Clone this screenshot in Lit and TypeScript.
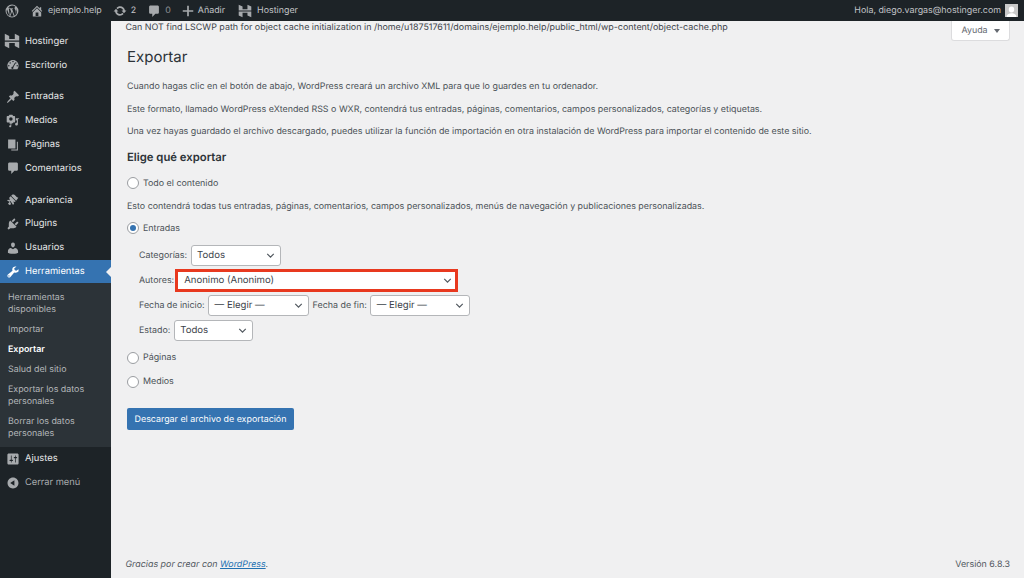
import { LitElement, html, css } from "lit";
import { customElement } from "lit/decorators.js";

const hostinger = html`<svg viewBox="0 0 20 20" width="100%" height="100%"><path fill="currentColor" d="M1 1l5.500 2.700V7.500h7V1l5.500 2.700V9.300H1zM1 10.800h18V19l-5.500-2.700v-3.800h-7V19L1 16.300z"/></svg>`;
const icon = (d: unknown) => html`<svg viewBox="0 0 20 20" width="100%" height="100%"><path fill="currentColor" d="${d}"/></svg>`;
const I = {
  wp: "M10 .8a9.200 9.200 0 1 0 0 18.400A9.200 9.200 0 0 0 10 .8zm0 1.400a7.800 7.800 0 0 1 5.300 2.100c-1-.1-1.700.7-1.700 1.600 0 .8.500 1.400 1 2.200.300.600.700 1.400.700 2.600 0 .8-.3 1.800-.7 3.100l-1 3-3.300-9.800c.500 0 1-.1 1-.1.500 0 .4-.8-.1-.7 0 0-1.500.1-2.400.1-.9 0-2.300-.1-2.300-.1-.5 0-.6.700-.1.700 0 0 .4.100.9.100l1.400 3.800-2 5.900L5.500 6.300c.5 0 1-.1 1-.1.5 0 .4-.8-.1-.7 0 0-1.400.1-2.300.1A7.800 7.800 0 0 1 10 2.200zM2.900 7.500l3.700 10a7.800 7.800 0 0 1-3.700-10zm7.200 3.300l2.500 6.700a7.800 7.800 0 0 1-5 .1zm7-.8a7.800 7.800 0 0 1-3.400 7.200l2.400-7c.5-1.100.6-2 .6-2.800 0-.3 0-.6-.1-.8.300.5.500 1.400.500 3.400z",
  home: "M16 8.500l1.530 1.530-1.060 1.060L10 4.620l-6.470 6.470-1.060-1.060L10 2.500l4 4v-2h2v4zm-6-2.460l6 5.990V18H4v-5.970zM12 17v-5H8v5h4z",
  refresh: "M10.200 3.280c3.530 0 6.430 2.610 6.920 6h2.080l-3.500 4-3.500-4h2.320c-.450-1.970-2.210-3.440-4.320-3.440-1.450 0-2.730.71-3.540 1.780L4.950 5.660C6.230 4.200 8.110 3.280 10.200 3.280zm-.4 13.440c-3.520 0-6.430-2.610-6.920-6H.8l3.500-4c1.170 1.330 2.330 2.670 3.500 4H5.480c.450 1.970 2.210 3.440 4.320 3.440 1.450 0 2.730-.71 3.540-1.780l1.710 1.950c-1.280 1.460-3.150 2.390-5.250 2.390z",
  comment: "M5 2h10c1.100 0 2 .9 2 2v8c0 1.100-.9 2-2 2h-3l-4.500 4.500V14H5c-1.100 0-2-.9-2-2V4c0-1.100.9-2 2-2z",
  plus: "M17.500 8.800v2.400h-6.300v6.300H8.800v-6.300H2.500V8.800h6.300V2.500h2.400v6.300h6.300z",
  dash: "M3.760 16h12.480A7.970 7.970 0 0 0 18 11c0-4.420-3.580-8-8-8s-8 3.580-8 8a7.970 7.970 0 0 0 1.760 5zM10 4a1 1 0 1 1 0 2 1 1 0 0 1 0-2zM6 6a1 1 0 1 1 0 2 1 1 0 0 1 0-2zm8 0a1 1 0 1 1 0 2 1 1 0 0 1 0-2zm-1.500 1.300l1 .7-3 5.300a1.500 1.500 0 1 1-1-.7zM4 10a1 1 0 1 1 0 2 1 1 0 0 1 0-2zm12 0a1 1 0 1 1 0 2 1 1 0 0 1 0-2z",
  pin: "M10.440 3.020l1.820-1.820 6.360 6.350-1.830 1.820c-1.050-.68-2.480-.57-3.410.36l-.75.750c-.92.930-1.040 2.350-.35 3.410l-1.830 1.820-2.410-2.410-2.800 2.790c-.42.420-3.380 2.710-3.800 2.290s1.860-3.390 2.280-3.810l2.790-2.790L4.100 9.360l1.830-1.820c1.050.69 2.480.57 3.400-.36l.75-.75c.93-.92 1.050-2.350.36-3.410z",
  media: "M13 11V4c0-.55-.45-1-1-1h-1.670L9 1H5L3.670 3H2c-.55 0-1 .45-1 1v7c0 .55.45 1 1 1h10c.55 0 1-.45 1-1zM7 4.500a2.500 2.500 0 0 1 0 5 2.500 2.500 0 0 1 0-5zM14 6h5v.07L17 8v6.500c0 1.100-.9 2-2 2s-2-.9-2-2 .9-2 2-2c.17 0 .34.020.5.070V8.500L14 10V6zM5.150 14.200l1.360-.6v2.400c-.14-.04-.3-.06-.45-.06-.86 0-1.560.7-1.560 1.560s.7 1.500 1.560 1.500 1.500-.64 1.500-1.500v-3.700L10 13v-1.500H5.150z",
  pages: "M17 5.500V18H7.500v-1.500H15.500V5.500zM13.500 2v13H3V2z",
  brush: "M14.480 11.060L7.410 3.990l1.500-1.500c.5-.56 2.300-.47 3.510.32 1.210.8 1.430 1.280 2.060 2.140.640.850 1.420 1.060 1.420 1.060l1.700.71-3.120 4.340zM6.700 4.700l7.070 7.070-1.060 1.060-2.120-.7 1.060 3.530-1.770 1.060-3.530-5.300-.71.710 1.760 3.890-2.470 1.060-2.120-1.760 2.470-2.830L1.660 11l1.060-1.420 2.830.71-1.060-3.530z",
  plugin: "M13.110 4.360L9.870 7.600 8 5.730l3.240-3.240c.350-.340 1.050-.2 1.560.32.520.510.660 1.210.31 1.550zm-8 1.770l.91-1.120 9.010 9.010-1.190.84c-.710.710-2.630 1.160-3.820 1.160H6.140L4.900 17.260c-.59.590-1.540.59-2.120 0a1.500 1.500 0 0 1 0-2.120l1.240-1.240v-3.880c0-1.130.4-3.180 1.090-3.890zm7.260 3.970l3.240-3.240c.340-.350 1.040-.210 1.550.31.520.510.660 1.210.31 1.550l-3.240 3.250z",
  users: "M10 9.250c-2.270 0-2.730-3.440-2.730-3.440C7 4.020 7.820 2 9.970 2c2.160 0 2.980 2.020 2.710 3.810 0 0-.41 3.440-2.680 3.440zm0 2.570L12.720 10c2.390 0 4.520 2.330 4.520 4.530v2.490s-3.650 1.130-7.240 1.130c-3.650 0-7.240-1.130-7.240-1.130v-2.490c0-2.250 1.940-4.480 4.150-4.480z",
  tools: "M16.680 9.770c-1.340 1.340-3.300 1.670-4.950.99l-5.410 6.520c-.99.990-2.590.99-3.570 0-.99-.98-.99-2.580 0-3.570l6.520-5.420c-.68-1.650-.35-3.610.99-4.950 1.280-1.280 3.120-1.640 4.730-1.080L11.620 5.150l.99 2.250 2.240.99 2.920-2.380c.56 1.610.2 3.450-1.090 4.760zM4.180 16.500a.9.9 0 1 0 0-1.800.9.9 0 0 0 0 1.800z",
  settings: "M18 16V4c0-1.100-.9-2-2-2H4c-1.100 0-2 .9-2 2v12c0 1.100.9 2 2 2h12c1.100 0 2-.9 2-2zM8 11h1c.55 0 1 .45 1 1s-.45 1-1 1H8v1.500c0 .28-.22.500-.5.500s-.5-.22-.5-.5V13H6c-.55 0-1-.45-1-1s.45-1 1-1h1V5.500c0-.28.22-.5.500-.5s.5.220.5.500V11zm5-2h-1c-.55 0-1-.45-1-1s.45-1 1-1h1V5.500c0-.28.22-.5.500-.5s.5.220.5.500V7h1c.55 0 1 .45 1 1s-.45 1-1 1h-1v5.500c0 .28-.22.500-.5.500s-.5-.22-.5-.5V9z",
  collapse: "M10 2.160c4.330 0 7.840 3.510 7.840 7.840s-3.510 7.840-7.840 7.840S2.160 14.330 2.160 10 5.670 2.160 10 2.160zM12 14V6l-6 4z",
};

@customElement("app-root")
export class AppRoot extends LitElement {
  static styles = css`
    :host { display: flex; flex-direction: column; width: 1024px; height: 578px; overflow: hidden; background: #f0f0f1; color: #4a5056; font-family: Inter, "Liberation Sans", sans-serif; font-size: 8.900px; position: relative; text-rendering: geometricPrecision; }
    .bar { height: 21px; background: #1d2327; color: #c3c4c7; display: flex; align-items: center; flex: none; font-size: 8.900px; }
    .bar .i { width: 14px; height: 14px; display: block; color: #a7aaad; flex: none; }
    .bi { display: flex; align-items: center; gap: 4px; }
    .bi.a { margin-left: 11px; }
    .bi.p { margin-left: 10px; gap: 3px; }
    .bi.w { margin-left: 13px; gap: 5px; }
    .zero { color: #8c8f94; }
    .barLeft { display: flex; align-items: center; flex: 1; padding-left: 5px; }
    .barRight { display: flex; align-items: center; gap: 4px; padding-right: 6px; }
    .avatar { width: 13px; height: 13px; background: #c9c9c9; display: flex; align-items: flex-end; justify-content: center; overflow: hidden; }
    .avatar svg { width: 11px; height: 11px; display: block; }
    .body { display: flex; flex: 1; min-height: 0; }
    .side { width: 111px; flex: none; background: #1d2327; color: #e6e7e8; font-size: 9.400px; padding-top: 8.500px; box-sizing: border-box; }
    .m { height: 23.800px; display: flex; align-items: center; position: relative; }
    .m .ic { width: 14px; height: 14px; margin-left: 6px; margin-right: 5px; color: #a7aaad; flex: none; }
    .m.host .ic { width: 16px; height: 16px; margin-left: 4px; margin-right: 5px; }
    .gap { height: 8px; }
    .m.cur { background: #3573b1; color: #fff; }
    .m.cur .ic { color: #fff; }
    .m.cur::after { content: ""; position: absolute; right: 0; top: 7px; border: 5px solid transparent; border-right-color: #f0f0f1; border-left: 0; }
    .sub { background: #2c3338; color: #b4b7ba; font-size: 8.900px; line-height: 12px; padding: 8.200px 8px 0; display: flex; flex-direction: column; gap: 8px; height: 163.500px; box-sizing: border-box; }
    .sub b { color: #fff; font-weight: 600; }
    .dim { color: #a7aaad; font-size: 9.300px; }
    .main { flex: 1; min-width: 0; padding: 0 14px 0 16px; display: flex; flex-direction: column; position: relative; }
    .notice { height: 13px; line-height: 13px; margin-left: -1.500px; color: #3c434a; font-size: 8.930px; }
    .help { position: absolute; top: 0; right: 14px; width: 59px; height: 20px; background: #fff; border: 1px solid #dcdcde; border-top: 0; border-radius: 0 0 3px 3px; box-sizing: border-box; display: flex; align-items: center; justify-content: center; gap: 6px; color: #646970; }
    .help::after { content: ""; border: 3px solid transparent; border-top: 4px solid #646970; border-bottom: 0; }
    h1 { font-size: 15px; line-height: 22px; font-weight: 400; color: #2c3338; margin: 12px 0 0; }
    p { margin: 0; line-height: 13px; }
    .intro { display: flex; flex-direction: column; gap: 9.500px; margin-top: 12px; }
    h2 { font-size: 11.300px; line-height: 16px; font-weight: 600; color: #2c3338; margin: 11px 0 0; }
    .r { display: flex; align-items: center; gap: 4px; height: 14px; }
    .r.t { margin-top: 11px; }
    .r.e { margin-top: 8px; }
    .r.pa { margin-top: 8px; }
    .r.me { margin-top: 10px; }
    .radio { width: 10px; height: 10px; border-radius: 50%; background: #fff; border: 1px solid #9a9da1; flex: none; display: flex; align-items: center; justify-content: center; }
    .radio.on::after { content: ""; width: 6px; height: 6px; border-radius: 50%; background: #3573b1; }
    .desc { margin-top: 10px; }
    .f { display: flex; flex-direction: column; margin-top: 7.500px; }
    .row { display: flex; align-items: center; padding-left: 12px; gap: 3.500px; height: 25px; }
    .row.tight { gap: 1px; }
    .sel { height: 21px; background: #fff; border: 1px solid #b4b6b9; border-radius: 3px; box-sizing: border-box; display: flex; align-items: center; justify-content: space-between; padding: 0 3px 0 5.500px; font-size: 9.600px; color: #3c434a; flex: none; }
    .sel svg { width: 13px; height: 13px; flex: none; }
    .red { border: 3px solid #e8391f; border-radius: 0; height: 23px; padding-left: 6px; padding-right: 1.500px; }
    .btn { width: 167px; height: 22px; background: #3573b1; color: #fff; border-radius: 2px; display: flex; align-items: center; justify-content: center; margin-top: 19.500px; }
    .foot { margin-top: auto; height: 28px; display: flex; align-items: center; justify-content: space-between; color: #50575e; margin-left: -1.500px; }
    .foot a { color: #2271b1; text-decoration: underline; }
  `;

  menu(name: string, ic: unknown, cls = "") {
    return html`<div class="m ${cls}"><div class="ic">${ic}</div><span>${name}</span></div>`;
  }
  chev() {
    return html`<svg viewBox="0 0 20 20"><path d="M5 7.500l5 5 5-5" fill="none" stroke="#50575e" stroke-width="1.800"/></svg>`;
  }
  sel(label: string, w: number, cls = "") {
    return html`<div class="sel ${cls}" style="width:${w}px"><span>${label}</span>${this.chev()}</div>`;
  }

  render() {
    return html`
      <div class="bar">
        <div class="barLeft">
          <div class="bi"><div class="i">${icon(I.wp)}</div></div>
          <div class="bi a"><div class="i">${icon(I.home)}</div><span>ejemplo.help</span></div>
          <div class="bi a"><div class="i">${icon(I.refresh)}</div><span>2</span></div>
          <div class="bi a"><div class="i">${icon(I.comment)}</div><span class="zero">0</span></div>
          <div class="bi p"><div class="i">${icon(I.plus)}</div><span>Añadir</span></div>
          <div class="bi w"><div class="i">${hostinger}</div><span>Hostinger</span></div>
        </div>
        <div class="barRight"><span>Hola, diego.vargas@hostinger.com</span>
          <div class="avatar"><svg viewBox="0 0 20 20"><path fill="#fff" d="M10 1a4.500 5 0 0 1 0 11 4.500 5 0 0 1 0-11zM1 20c0-5 4-7 9-7s9 2 9 7z"/></svg></div>
        </div>
      </div>
      <div class="body">
        <nav class="side">
          ${this.menu("Hostinger", hostinger, "host")}
          ${this.menu("Escritorio", icon(I.dash))}
          <div class="gap"></div>
          ${this.menu("Entradas", icon(I.pin))}
          ${this.menu("Medios", icon(I.media))}
          ${this.menu("Páginas", icon(I.pages))}
          ${this.menu("Comentarios", icon(I.comment))}
          <div class="gap"></div>
          ${this.menu("Apariencia", icon(I.brush))}
          ${this.menu("Plugins", icon(I.plugin))}
          ${this.menu("Usuarios", icon(I.users))}
          ${this.menu("Herramientas", icon(I.tools), "cur")}
          <div class="sub">
            <span>Herramientas disponibles</span><span>Importar</span><b>Exportar</b><span>Salud del sitio</span>
            <span>Exportar los datos personales</span><span>Borrar los datos personales</span>
          </div>
          ${this.menu("Ajustes", icon(I.settings))}
          <div class="m dim"><div class="ic">${icon(I.collapse)}</div><span>Cerrar menú</span></div>
        </nav>
        <main class="main">
          <p class="notice">Can NOT find LSCWP path for object cache initialization in /home/u187517611/domains/ejemplo.help/public_html/wp-content/object-cache.php</p>
          <div class="help">Ayuda</div>
          <h1>Exportar</h1>
          <div class="intro">
            <p>Cuando hagas clic en el botón de abajo, WordPress creará un archivo XML para que lo guardes en tu ordenador.</p>
            <p>Este formato, llamado WordPress eXtended RSS o WXR, contendrá tus entradas, páginas, comentarios, campos personalizados, categorías y etiquetas.</p>
            <p>Una vez hayas guardado el archivo descargado, puedes utilizar la función de importación en otra instalación de WordPress para importar el contenido de este sitio.</p>
          </div>
          <h2>Elige qué exportar</h2>
          <div class="r t"><span class="radio"></span>Todo el contenido</div>
          <p class="desc">Esto contendrá todas tus entradas, páginas, comentarios, campos personalizados, menús de navegación y publicaciones personalizadas.</p>
          <div class="r e"><span class="radio on"></span>Entradas</div>
          <div class="f">
            <div class="row"><span>Categorías:</span>${this.sel("Todos", 90)}</div>
            <div class="row tight"><span>Autores:</span>${this.sel("Anonimo (Anonimo)", 283, "red")}</div>
            <div class="row"><span>Fecha de inicio:</span>${this.sel("— Elegir —", 101)}<span>Fecha de fin:</span>${this.sel("— Elegir —", 100)}</div>
            <div class="row"><span>Estado:</span>${this.sel("Todos", 79)}</div>
          </div>
          <div class="r pa"><span class="radio"></span>Páginas</div>
          <div class="r me"><span class="radio"></span>Medios</div>
          <div class="btn">Descargar el archivo de exportación</div>
          <div class="foot"><em>Gracias por crear con <a>WordPress</a>.</em><span>Versión 6.8.3</span></div>
        </main>
      </div>
    `;
  }
}
